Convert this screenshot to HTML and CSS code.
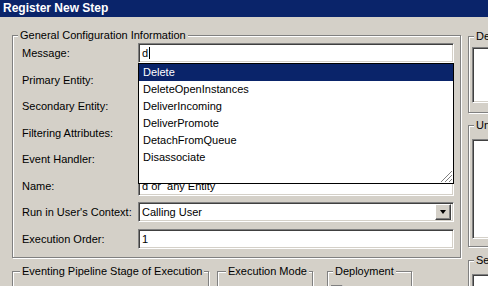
FILE: index.html
```html
<!DOCTYPE html>
<html lang="en">
<head>
  <meta charset="UTF-8" />
  <title>Register New Step</title>
  <link rel="stylesheet" href="styles.css">
</head>
<body>
  <div class="titlebar">Register New Step</div>

  <div class="window-body">
    <div class="main-col">
      <fieldset class="group general">
        <legend>General Configuration Information</legend>
        <div class="form-grid">
          <label>Message:</label>
          <div class="field-wrap">
            <div class="textbox">d<span class="caret"></span></div>
            <div class="suggest-list">
              <ul>
                <li class="selected">Delete</li>
                <li>DeleteOpenInstances</li>
                <li>DeliverIncoming</li>
                <li>DeliverPromote</li>
                <li>DetachFromQueue</li>
                <li>Disassociate</li>
              </ul>
              <svg class="grip" width="13" height="13" viewBox="0 0 13 13">
                <path d="M12 1 L1 12 M12 5 L5 12 M12 9 L9 12" stroke="#808080" stroke-width="1" />
                <path d="M12 2 L2 12 M12 6 L6 12 M12 10 L10 12" stroke="#ffffff" stroke-width="1" />
              </svg>
            </div>
          </div>

          <label>Primary Entity:</label>
          <div class="textbox"></div>

          <label>Secondary Entity:</label>
          <div class="textbox"></div>

          <label>Filtering Attributes:</label>
          <div class="textbox"></div>

          <label>Event Handler:</label>
          <div class="textbox"></div>

          <label>Name:</label>
          <div class="textbox">d or &nbsp;any Entity</div>

          <label>Run in User's Context:</label>
          <div class="textbox combo">
            <span>Calling User</span>
            <span class="combo-btn"><span class="arrow"></span></span>
          </div>

          <label>Execution Order:</label>
          <div class="textbox">1</div>
        </div>
      </fieldset>

      <div class="bottom-groups">
        <fieldset class="group stage">
          <legend>Eventing Pipeline Stage of Execution</legend>
        </fieldset>
        <fieldset class="group mode">
          <legend>Execution Mode</legend>
        </fieldset>
        <fieldset class="group deploy">
          <legend>Deployment</legend>
          <span class="checkbox"></span>
        </fieldset>
      </div>
    </div>

    <div class="side-col">
      <fieldset class="group side desc">
        <legend>Description</legend>
        <div class="textarea short"></div>
      </fieldset>
      <fieldset class="group side">
        <legend>Unsecure Configuration</legend>
        <div class="textarea tall"></div>
      </fieldset>
      <fieldset class="group side">
        <legend>Secure Configuration</legend>
        <div class="textarea tall"></div>
      </fieldset>
    </div>
  </div>
</body>
</html>
```

FILE: styles.css
```css
* {
  margin: 0;
  padding: 0;
  box-sizing: border-box;
}

html, body {
  width: 488px;
  height: 286px;
  overflow: hidden;
}

body {
  background: #d4d0c8;
  color: #000;
  font-family: "Liberation Sans", Arial, sans-serif;
  font-size: 11px;
}

.titlebar {
  height: 17px;
  background: #0a246a;
  color: #fff;
  font-weight: bold;
  font-size: 12px;
  line-height: 17px;
  padding-left: 3px;
}

.window-body {
  display: flex;
  padding-left: 12px;
}

.main-col {
  width: 449px;
  flex: none;
  padding-top: 12px;
}

/* etched group box */
.group {
  border: 1px solid #808080;
  box-shadow: inset 1px 1px 0 #fff, 1px 1px 0 #fff;
  min-width: 0;
}

.group legend {
  margin-left: 5px;
  padding: 0 2px;
  line-height: 13px;
  background: #d4d0c8;
}

.form-grid {
  display: grid;
  grid-template-columns: 116px 1fr;
  grid-auto-rows: 20px;
  row-gap: 6.5px;
  align-items: center;
  padding: 1px 6px 8px 9px;
}

.field-wrap {
  position: relative;
  height: 20px;
}

/* sunken text box */
.textbox {
  height: 20px;
  border: 1px solid;
  border-color: #808080 #fff #fff #808080;
  box-shadow: inset 1px 1px 0 #404040, inset -1px -1px 0 #d4d0c8;
  background: #fff;
  padding: 0 3px;
  line-height: 18px;
  white-space: nowrap;
  overflow: hidden;
}

.caret {
  display: inline-block;
  width: 1px;
  height: 12px;
  background: #000;
  vertical-align: -2px;
  margin-left: 1px;
}

/* autocomplete list */
.suggest-list {
  position: absolute;
  top: 100%;
  left: 0;
  width: 316px;
  height: 121px;
  background: #fff;
  border: 1px solid #000;
  z-index: 10;
}

.suggest-list ul {
  list-style: none;
}

.suggest-list li {
  height: 17px;
  line-height: 17px;
  padding-left: 4px;
}

.suggest-list li.selected {
  background: #0a246a;
  color: #fff;
}

.grip {
  position: absolute;
  right: 0;
  bottom: 0;
}

.combo {
  display: flex;
  justify-content: space-between;
  align-items: center;
  padding-right: 2px;
}

.combo-btn {
  width: 16px;
  height: 16px;
  background: #d4d0c8;
  border: 1px solid;
  border-color: #fff #404040 #404040 #fff;
  box-shadow: inset -1px -1px 0 #808080;
  display: flex;
  align-items: center;
  justify-content: center;
}

.arrow {
  width: 0;
  height: 0;
  border-left: 3.5px solid transparent;
  border-right: 3.5px solid transparent;
  border-top: 4px solid #000;
}

.bottom-groups {
  display: flex;
  margin-top: 7px;
}

.bottom-groups .group {
  height: 60px;
}

.bottom-groups legend {
  margin-left: 7px;
}

.stage {
  width: 197px;
}

.mode {
  width: 96px;
  margin-left: 8px;
}

.mode legend {
  margin-left: 8px;
}

.deploy {
  width: 85px;
  margin-left: 14px;
}

.deploy legend {
  margin-left: 5px;
}

.checkbox {
  display: block;
  width: 12px;
  height: 12px;
  margin: 7px 0 0 3px;
  background: #d4d0c8;
  border: 1px solid;
  border-color: #808080 #fff #fff #808080;
}

.side-col {
  width: 200px;
  flex: none;
  margin-left: 7px;
  padding-top: 13px;
}

.side {
  padding: 7px 6px 7px 3px;
  margin-bottom: 7px;
}

.side legend {
  margin-left: 2px;
}

.side.desc {
  padding-top: 4px;
  padding-bottom: 9px;
  margin-bottom: 6px;
}

.textarea {
  background: #fff;
  border: 1px solid;
  border-color: #808080 #fff #fff #808080;
  box-shadow: inset 1px 1px 0 #404040, inset -1px -1px 0 #d4d0c8;
}

.textarea.short {
  height: 56px;
}

.textarea.tall {
  height: 100px;
}
```
